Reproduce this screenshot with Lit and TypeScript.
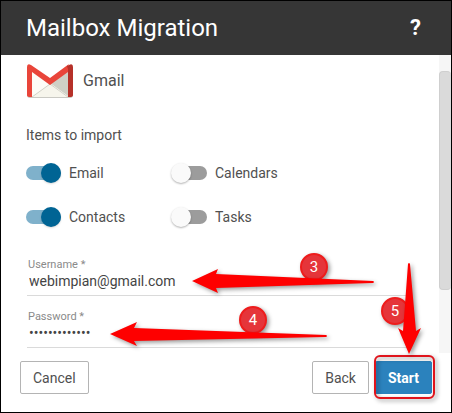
import { LitElement, html, css, svg } from "lit";
import { customElement, property, state } from "lit/decorators.js";

@customElement("import-switch")
class ImportSwitch extends LitElement {
  @property() label = "";
  @property({ type: Boolean }) on = false;

  static styles = css`
    :host { display: block; }
    .switch { display: flex; align-items: center; gap: 8px; height: 20px; cursor: pointer; }
    .box {
      appearance: none; margin: 0; width: 35px; height: 20px; flex: none;
      display: flex; align-items: center; position: relative; cursor: pointer;
    }
    .box::before { content: ""; width: 35px; height: 14px; border-radius: 7px; background: #9c9c9c; }
    .box::after {
      content: ""; position: absolute; left: -1px; top: 0; width: 20px; height: 20px;
      border-radius: 50%; background: #fafafa; box-shadow: 0 1px 2px rgba(0, 0, 0, 0.3);
    }
    .box:checked::before { background: #7fb1cb; }
    .box:checked::after { left: 15px; background: #006494; box-shadow: 0 1px 2px rgba(0, 0, 0, 0.15); }
    .text { font-size: 14px; line-height: 20px; color: #505050; }
  `;

  render() {
    return html`<label class="switch">
      <input class="box" type="checkbox" role="switch" .checked=${this.on} />
      <span class="text">${this.label}</span>
    </label>`;
  }
}

@customElement("gmail-logo")
class GmailLogo extends LitElement {
  static styles = css`
    :host { display: block; line-height: 0; }
    .logo { width: 46px; height: 34px; }
  `;

  render() {
    return html`<svg class="logo" viewBox="0 0 46 34" aria-hidden="true">
      <rect x="0" y="1" width="46" height="33" rx="3" fill="#c9c9c3" />
      <rect x="1" y="1" width="44" height="32" rx="2" fill="#fdfcf7" />
      <path d="M0 0H46V3L23 18 0 3Z" fill="#fff" />
      <path d="M23 19 41 7V32Z" fill="#cfd0c6" />
      <path d="M5 33 23 20 41 33Z" fill="#f6f5ec" />
      <path d="M5 33 23 20 41 33" fill="none" stroke="#d2d2c8" stroke-width="1" />
      <path d="M0 3V31Q0 33 3 33H5V8L23 21 41 8V2L42 0 23 14 4 1Q0-1 0 3Z" fill="#e9453a" />
      <path d="M41 5V33H43Q46 33 46 31V3Q46-1 42 1L40 2Z" fill="#b63129" />
    </svg>`;
  }
}

@customElement("step-marks")
class StepMarks extends LitElement {
  static styles = css`
    :host { position: absolute; inset: -1px; pointer-events: none; }
    .marks { display: block; width: 452px; height: 413px; overflow: visible; }
    .shade { filter: drop-shadow(2px 2px 2px rgba(0, 0, 0, 0.4)); }
    .disc { fill: #e5353a; stroke: #ee1c1c; stroke-width: 2; }
    .num { font: 15px Roboto, sans-serif; fill: #fff; text-anchor: middle; }
    .arrow { fill: #fe0000; }
    .ring { fill: none; stroke: #e0141c; stroke-width: 2; }
  `;

  private disc(n: number, x: number, y: number) {
    return svg`<g class="shade"><circle class="disc" cx=${x} cy=${y} r="13" /></g>
      <text class="num" x=${x} y=${y + 5}>${n}</text>`;
  }

  render() {
    return html`<svg class="marks" viewBox="0 0 452 413">
      ${this.disc(3, 314, 267)} ${this.disc(4, 253, 320)} ${this.disc(5, 395, 311)}
      <rect class="ring shade" x="375" y="356" width="59" height="42" rx="5" />
      <g class="shade">
        <path class="arrow" d="M192 281 218 269 216 274 373 281Q375 282 373 283L216 288 218 293Z" />
        <path class="arrow" d="M110 334 137 322 134 328 326 335Q328 336 326 337L134 341 137 346Z" />
        <path class="arrow" d="M409 354 398 328 403 331 408 264Q409 262 410 264L416 331 421 328Z" />
      </g>
    </svg>`;
  }
}

@customElement("app-root")
class AppRoot extends LitElement {
  @state() private items = [
    { label: "Email", on: true },
    { label: "Calendars", on: false },
    { label: "Contacts", on: true },
    { label: "Tasks", on: false },
  ];

  static styles = css`
    :host {
      display: flex; flex-direction: column; position: relative; box-sizing: border-box;
      min-height: 100vh; border: 1px solid #000; background: #fff; color: #505050;
      font-family: Roboto, sans-serif; font-size: 14px; line-height: 20px;
    }
    .head {
      display: flex; align-items: center; justify-content: space-between;
      height: 54px; padding: 0 30px 0 25px; background: #363636; color: #fff;
    }
    .title { margin: 0; font-size: 24px; line-height: 32px; font-weight: 400; }
    .help { border: 0; padding: 0; background: none; color: #fff; font: 700 22px/32px Roboto, sans-serif; }
    .body { flex: 1; display: flex; }
    .form { flex: 1; padding: 8px 32px 0 25px; }
    .service { display: flex; align-items: center; gap: 10px; height: 36px; padding-left: 1px; font-size: 16px; }
    .group { border: 0; margin: 26px 0 0; padding: 0; }
    .legend { padding: 0; }
    .switches { display: grid; grid-template-columns: 146px 1fr; row-gap: 24px; margin-top: 18px; }
    .field { display: flex; flex-direction: column; margin-left: 1px; border-bottom: 1px solid #dadada; }
    .first { margin-top: 32px; }
    .field + .field { margin-top: 15px; }
    .caption { padding-left: 1px; font-size: 11px; line-height: 12px; color: #8a8a8a; }
    .input {
      box-sizing: border-box; border: 0; outline: 0; background: none; margin: 0;
      padding: 0 0 4px 2px; height: 24px; font: 14px/20px Roboto, sans-serif; color: #444;
    }
    .bar { width: 12px; background: #f6f6f6; padding: 16px 0 63px; display: flex; }
    .thumb { flex: 1; border: 1px solid #cfcfcf; border-right: 0; border-radius: 4px; background: #dadada; }
    .foot { display: flex; gap: 6px; padding: 8px 19px 18px 19px; }
    .btn {
      height: 33px; padding: 0 12px; border: 1px solid #b4b4b4; border-radius: 2px;
      background: #fff; color: #505050; font: 14px/20px Roboto, sans-serif;
    }
    .cancel { margin-right: auto; }
    .start { background: #2b82bd; border-color: #2b82bd; color: #fff; font-weight: 700; }
  `;

  render() {
    return html`
      <header class="head">
        <h1 class="title">Mailbox Migration</h1>
        <button class="help" aria-label="Help">?</button>
      </header>
      <main class="body">
        <form class="form">
          <div class="service"><gmail-logo></gmail-logo><span>Gmail</span></div>
          <fieldset class="group">
            <legend class="legend">Items to import</legend>
            <div class="switches">
              ${this.items.map((i) => html`<import-switch .label=${i.label} .on=${i.on}></import-switch>`)}
            </div>
          </fieldset>
          <div class="field first">
            <label class="caption" for="user">Username *</label>
            <input class="input" id="user" type="text" value="webimpian@gmail.com" />
          </div>
          <div class="field">
            <label class="caption" for="pass">Password *</label>
            <input class="input" id="pass" type="password" value="migratemail01" />
          </div>
        </form>
        <div class="bar"><div class="thumb"></div></div>
      </main>
      <footer class="foot">
        <button class="btn cancel">Cancel</button>
        <button class="btn">Back</button>
        <button class="btn start">Start</button>
      </footer>
      <step-marks></step-marks>
    `;
  }
}
